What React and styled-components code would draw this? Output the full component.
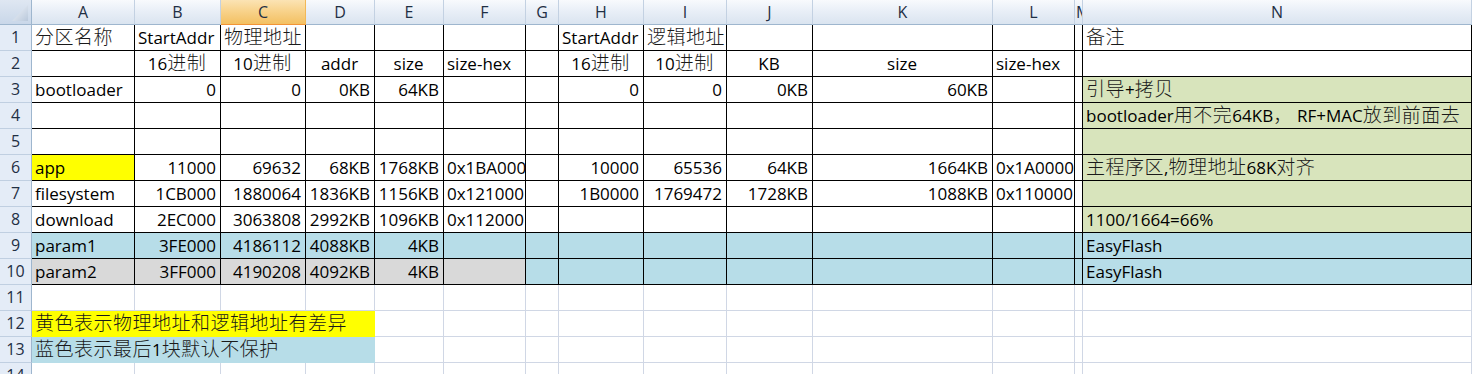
import React from 'react'
import styled, { createGlobalStyle } from 'styled-components'

const GREEN = '#d8e4bc'
const BLUE = '#b7dde8'
const GRAY = '#d9d9d9'
const YELLOW = '#ffff00'

const COLS = ['A', 'B', 'C', 'D', 'E', 'F', 'G', 'H', 'I', 'J', 'K', 'L', 'M', 'N']
const WIDTHS = [103, 86, 85, 69, 69, 82, 33, 85, 83, 86, 180, 82, 8, 389]

const GlobalStyle = createGlobalStyle`
  body {
    margin: 0;
    background: #fff;
    overflow: hidden;
    font-family: "Open Sans", "Noto Sans CJK SC", sans-serif;
  }
`

const Sheet = styled.div`
  display: grid;
  grid-template-columns: 32px ${WIDTHS.map((w) => w + 'px').join(' ')};
  grid-template-rows: 25px;
  grid-auto-rows: 26px;
  width: 1472px;
  height: 374px;
  overflow: hidden;
`

const Corner = styled.div`
  box-sizing: border-box;
  background: linear-gradient(#dfe7f2, #c9d7e9);
  border-right: 1px solid #9eb6ce;
  border-bottom: 1px solid #9eb6ce;
  display: flex;
  align-items: flex-end;
  justify-content: flex-end;
  padding: 0 3px 3px 0;
`

const ColHead = styled.div`
  box-sizing: border-box;
  background: ${(p) =>
    p.$active
      ? 'linear-gradient(#fbe3b4, #f8d38c 45%, #f3c062)'
      : 'linear-gradient(#f8fafd, #e9eff7 45%, #dae4f0)'};
  border-right: 1px solid ${(p) => (p.$active ? '#f2b857' : '#c3d1e2')};
  border-bottom: 1px solid ${(p) => (p.$active ? '#f29436' : '#9eb6ce')};
  color: #1f2f44;
  font-size: 16px;
  line-height: 24px;
  text-align: ${(p) => (p.$narrow ? 'left' : 'center')};
  padding-left: ${(p) => (p.$narrow ? '1px' : '0')};
  overflow: hidden;
  white-space: nowrap;
`

const RowHead = styled.div`
  box-sizing: border-box;
  background: #e4ecf7;
  border-right: 1px solid #9eb6ce;
  border-bottom: 1px solid #c0cfe1;
  color: #1f2f44;
  font-size: 16px;
  line-height: 25px;
  text-align: center;
`

const Cell = styled.div`
  box-sizing: border-box;
  grid-column: ${(p) => (p.$span ? `span ${p.$span}` : 'auto')};
  border-right: 1px solid ${(p) => p.$line};
  border-bottom: 1px solid ${(p) => p.$line};
  background: ${(p) => p.$fill || 'transparent'};
  padding: 1px 4px 0 3px;
  text-align: ${(p) => p.$align};
  font-size: 17px;
  line-height: 24px;
  color: #000;
  white-space: nowrap;
`

const Han = styled.span`
  font-family: "Noto Sans CJK SC", sans-serif;
  font-size: 19px;
  font-weight: 300;
  letter-spacing: 0.5px;
  line-height: 1;
  color: #1a1a1a;
`

// split text into latin and CJK runs so each gets its own face and size
const Text = ({ children }) => {
  if (!children) return null
  return children
    .split(/([\u3000-\u9fff\uff00-\uffef]+)/)
    .map((part, i) => (i % 2 ? <Han key={i}>{part}</Han> : part))
}

const R = (t) => ({ t, a: 'right' })
const C = (t) => ({ t, a: 'center' })

const rows = [
  {
    cells: ['分区名称', 'StartAddr', '物理地址', '', '', '', '', 'StartAddr', '逻辑地址', '', '', '', '', '备注'],
  },
  {
    cells: ['', C('16进制'), C('10进制'), C('addr'), C('size'), 'size-hex', '', C('16进制'), C('10进制'), C('KB'), C('size'), 'size-hex', '', ''],
  },
  {
    cells: ['bootloader', R('0'), R('0'), R('0KB'), R('64KB'), '', '', R('0'), R('0'), R('0KB'), R('60KB'), '', '', '引导+拷贝'],
    fills: { 13: GREEN },
  },
  {
    cells: ['', '', '', '', '', '', '', '', '', '', '', '', '', 'bootloader用不完64KB， RF+MAC放到前面去'],
    fills: { 13: GREEN },
  },
  {
    cells: ['', '', '', '', '', '', '', '', '', '', '', '', '', ''],
    fills: { 13: GREEN },
  },
  {
    cells: ['app', R('11000'), R('69632'), R('68KB'), R('1768KB'), '0x1BA000', '', R('10000'), R('65536'), R('64KB'), R('1664KB'), '0x1A0000', '', '主程序区,物理地址68K对齐'],
    fills: { 0: YELLOW, 13: GREEN },
  },
  {
    cells: ['filesystem', R('1CB000'), R('1880064'), R('1836KB'), R('1156KB'), '0x121000', '', R('1B0000'), R('1769472'), R('1728KB'), R('1088KB'), '0x110000', '', ''],
    fills: { 13: GREEN },
  },
  {
    cells: ['download', R('2EC000'), R('3063808'), R('2992KB'), R('1096KB'), '0x112000', '', '', '', '', '', '', '', '1100/1664=66%'],
    fills: { 13: GREEN },
  },
  {
    cells: ['param1', R('3FE000'), R('4186112'), R('4088KB'), R('4KB'), '', '', '', '', '', '', '', '', 'EasyFlash'],
    fill: BLUE,
  },
  {
    cells: ['param2', R('3FF000'), R('4190208'), R('4092KB'), R('4KB'), '', '', '', '', '', '', '', '', 'EasyFlash'],
    fills: { 0: GRAY, 1: GRAY, 2: GRAY, 3: GRAY, 4: GRAY, 5: GRAY },
    fill: BLUE,
  },
]

// rows below the table: plain gridlines, two coloured notes spanning A:D
const notes = [
  null,
  { t: '黄色表示物理地址和逻辑地址有差异', fill: YELLOW },
  { t: '蓝色表示最后1块默认不保护', fill: BLUE },
  null,
]

export default function App() {
  return (
    <>
      <GlobalStyle />
      <Sheet>
        <Corner>
          <svg width="16" height="16" viewBox="0 0 16 16">
            <defs>
              <linearGradient id="tri" x1="0" y1="0" x2="1" y2="1">
                <stop offset="0" stopColor="#f4f7fb" />
                <stop offset="1" stopColor="#b9c8db" />
              </linearGradient>
            </defs>
            <polygon points="16,0 16,16 0,16" fill="url(#tri)" />
          </svg>
        </Corner>
        {COLS.map((c, i) => (
          <ColHead key={c} $active={c === 'C'} $narrow={WIDTHS[i] < 20}>
            {c}
          </ColHead>
        ))}

        {rows.map((row, r) => (
          <React.Fragment key={r}>
            <RowHead>{r + 1}</RowHead>
            {row.cells.map((cell, c) => {
              const v = typeof cell === 'string' ? { t: cell, a: 'left' } : cell
              const fill = (row.fills && row.fills[c]) || row.fill
              return (
                <Cell key={c} $line="#000" $fill={fill} $align={v.a}>
                  <Text>{v.t}</Text>
                </Cell>
              )
            })}
          </React.Fragment>
        ))}

        {notes.map((note, n) => (
          <React.Fragment key={'n' + n}>
            <RowHead>{rows.length + n + 1}</RowHead>
            {note ? (
              <>
                <Cell $span={4} $line="transparent" $fill={note.fill} $align="left">
                  <Text>{note.t}</Text>
                </Cell>
                {COLS.slice(4).map((c) => (
                  <Cell key={c} $line="#d0d7e5" $align="left" />
                ))}
              </>
            ) : (
              COLS.map((c) => <Cell key={c} $line="#d0d7e5" $align="left" />)
            )}
          </React.Fragment>
        ))}
      </Sheet>
    </>
  )
}
